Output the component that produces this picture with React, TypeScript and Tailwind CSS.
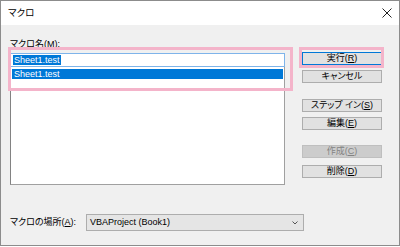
import React from 'react';

const font = "font-['Liberation_Sans','Noto_Sans_CJK_JP',sans-serif] [font-feature-settings:'palt']";

const DlgButton: React.FC<{ label: React.ReactNode; primary?: boolean; disabled?: boolean; className?: string }> = ({ label, primary, disabled, className = '' }) => (
  <div
    className={`h-[13px] w-[80px] flex items-center justify-center text-[9px] leading-none border ${
      disabled
        ? 'bg-[#cccccc] border-[#bfbfbf] text-[#838383]'
        : primary
        ? 'bg-[#e1e1e1] border-[#0078d7] text-black'
        : 'bg-[#e1e1e1] border-[#adadad] text-black'
    } ${className}`}
  >
    {label}
  </div>
);

const Key: React.FC<{ k: string }> = ({ k }) => (
  <>
    (<span className="underline underline-offset-1">{k}</span>)
  </>
);

export default function App() {
  return (
    <div className={`w-[400px] h-[247px] bg-white ${font}`}>
      <div className="relative w-[400px] h-[246px] border border-[#8c8c8c] flex flex-col">
        {/* Title bar */}
        <div className="h-[24px] bg-white flex items-center justify-between pl-[7px] pr-[7px]">
          <span className="text-[9.5px] text-black">マクロ</span>
          <svg width="10" height="10" viewBox="0 0 10 10" className="mr-[0px]">
            <path d="M0.5 0.5 L9.5 9.5 M9.5 0.5 L0.5 9.5" stroke="#222" strokeWidth="1" fill="none" />
          </svg>
        </div>

        {/* Body */}
        <div className="flex-1 bg-[#f0f0f0] flex flex-col pl-[9px] pt-[13px]">
          <div className="flex">
            {/* Left column */}
            <div className="w-[275px] flex flex-col">
              <div className="h-[12px] text-[9px] leading-[12px] text-black">
                マクロ名<Key k="M" />:
              </div>
              <div className="mt-[3px] h-[14px] bg-white border border-[#7eb4ea] flex items-center pl-[2px]">
                <span className="bg-[#0078d7] text-white text-[9px] leading-[10px] px-[1px]">Sheet1.test</span>
              </div>
              <div className="h-[118px] bg-white border border-[#a0a0a0] border-t-0 border-l-[#828282] pt-[2px] px-[1px]">
                <div className="h-[10px] bg-[#0078d7] text-white text-[9px] leading-[10px] pl-[2px]">Sheet1.test</div>
              </div>
            </div>

            {/* Right column: buttons */}
            <div className="ml-[17px] pt-[14px] flex flex-col">
              <DlgButton primary label={<>実行<Key k="R" /></>} />
              <DlgButton className="mt-[5px]" label="キャンセル" />
              <DlgButton className="mt-[16px]" label={<>ステップ イン<Key k="S" /></>} />
              <DlgButton className="mt-[5px]" label={<>編集<Key k="E" /></>} />
              <DlgButton className="mt-[15px]" disabled label={<>作成<Key k="C" /></>} />
              <DlgButton className="mt-[7px]" label={<>削除<Key k="D" /></>} />
            </div>
          </div>

          {/* Bottom row */}
          <div className="mt-[29px] flex items-center">
            <div className="w-[76px] text-[9px] leading-none text-black">
              マクロの場所<Key k="A" />:
            </div>
            <div className="w-[218px] h-[17px] bg-[#e5e5e5] border border-[#adadad] flex items-center justify-between pl-[3px] pr-[5px]">
              <span className="text-[9px] leading-none text-black">VBAProject (Book1)</span>
              <svg width="6" height="4" viewBox="0 0 6 4">
                <path d="M0.5 0.5 L3 3 L5.5 0.5" stroke="#555" strokeWidth="1" fill="none" />
              </svg>
            </div>
          </div>
        </div>

        {/* Pink annotation boxes */}
        <div className="absolute left-[7px] top-[46px] w-[285px] h-[44px] border-[3px] border-[#f4b4ca] pointer-events-none" />
        <div className="absolute left-[298px] top-[46px] w-[85px] h-[21px] border-[3px] border-[#f4b4ca] pointer-events-none" />
      </div>
    </div>
  );
}
